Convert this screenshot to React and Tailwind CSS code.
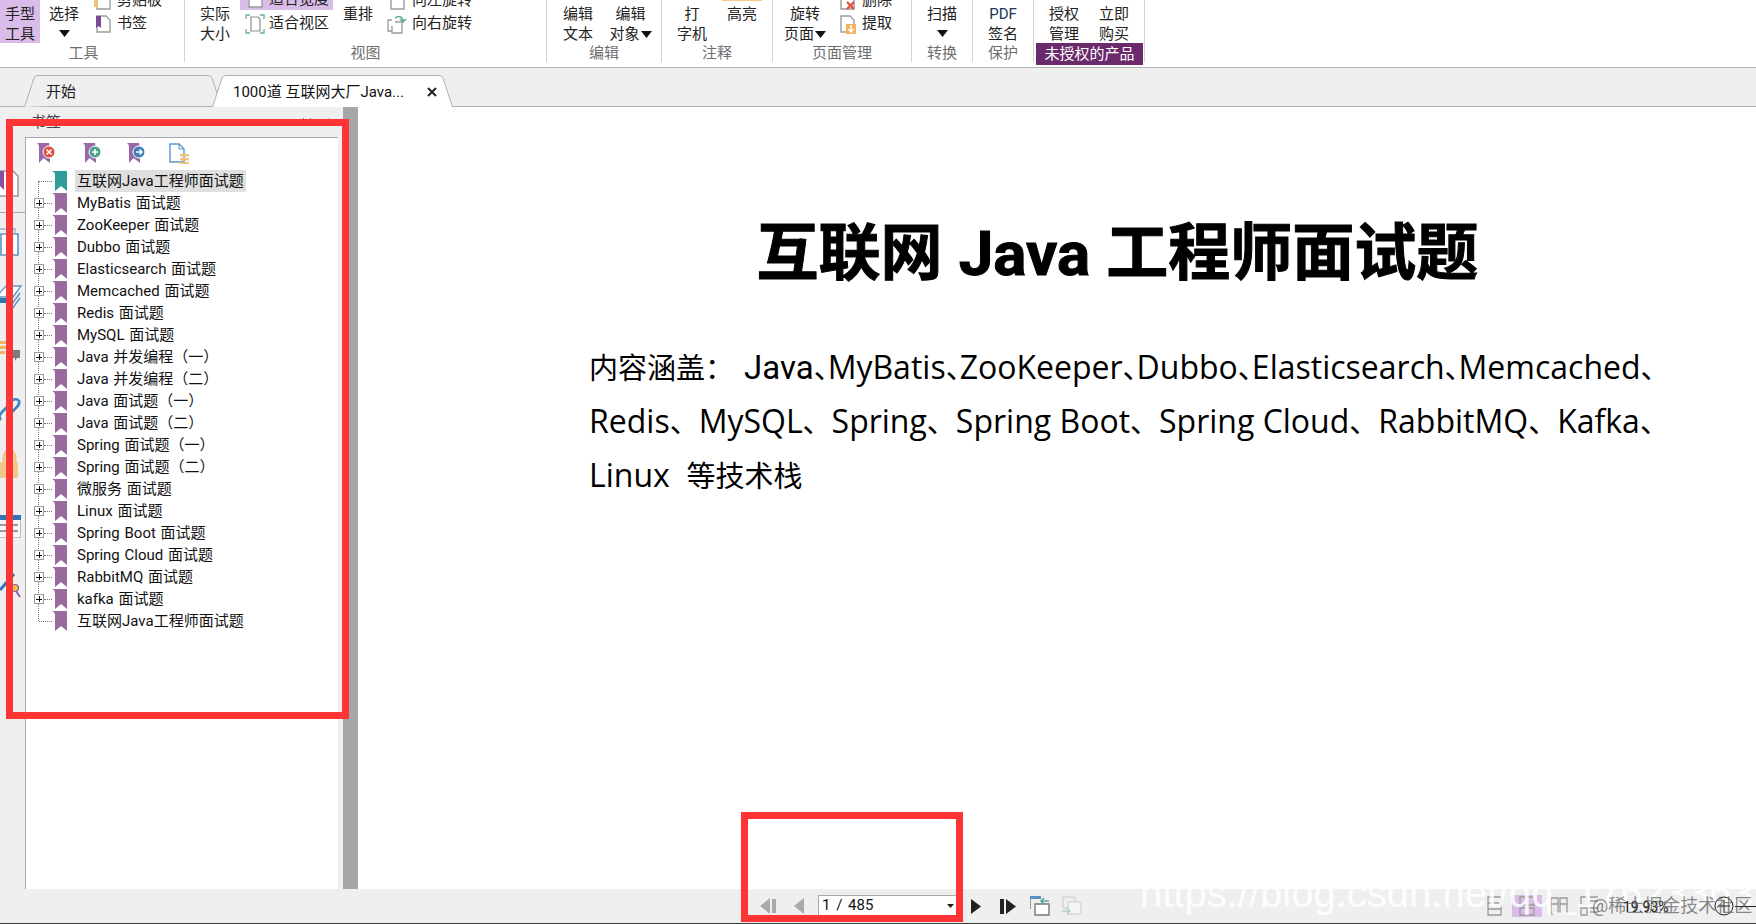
import React from "react";

const Arrow = ({ className = "" }) => (
  <svg width="11" height="7" viewBox="0 0 11 7" className={className}><path d="M0 0H11L5.5 7Z" fill="#111" /></svg>
);

function Big({ w, ml = "", lines, arrow, arrowInline }) {
  return (
    <div className={`flex flex-col items-center pt-[4px] leading-[20px] shrink-0 ${ml}`} style={{ width: w }}>
      {lines.map((l, i) => (
        <div key={i} className="h-[20px] flex items-center whitespace-nowrap">
          {l}
          {arrowInline && i === lines.length - 1 && <Arrow className="ml-[1px]" />}
        </div>
      ))}
      {arrow && <div className="h-[20px] flex items-center"><Arrow /></div>}
    </div>
  );
}

function Group({ w, label, pr = "", children }) {
  return (
    <div className="shrink-0 h-[62px] border-r border-[#d2d2d2] flex flex-col" style={{ width: w }}>
      <div className="h-[43px] flex">{children}</div>
      <div className={`text-center text-[#6e6e6e] leading-[20px] ${pr}`}>{label}</div>
    </div>
  );
}

const PageIc = ({ children }) => (
  <svg width="20" height="20" viewBox="0 0 20 20" className="shrink-0">
    <path d="M4 2H13L17 6V18H4Z" fill="#fff" stroke="#9c9c9c" strokeWidth="1.4" />
    {children}
  </svg>
);

function Side({ w, ml = "", gap = "ml-[6px]", rows }) {
  return (
    <div className={`shrink-0 flex flex-col -mt-[11px] ${ml}`} style={{ width: w }}>
      {rows.map((r, i) => (
        <div key={i} className="h-[23px] flex items-center whitespace-nowrap">{r.icon}<span className={gap}>{r.t}</span></div>
      ))}
    </div>
  );
}

function Ribbon() {
  return (
    <div className="h-[68px] shrink-0 bg-white border-b border-[#b4b4b4] flex overflow-hidden text-[15px] text-[#222]">
      <Group w={185} label="工具" pr="pr-[17px]">
        <div className="w-[40px] h-[43px] bg-[#d9bde8] flex flex-col pt-[4px] leading-[20px] shrink-0 text-center"><div>手型</div><div>工具</div></div>
        <Big w={48} lines={["选择"]} arrow />
        <Side w={70} ml="ml-[5px]" gap="ml-[4px]" rows={[
          { t: "剪贴板", icon: <PageIc><path d="M1 5H5V16H1Z" fill="#f0c27a" /></PageIc> },
          { t: "书签", icon: <PageIc><path d="M3 2H8V14L5.5 12L3 14Z" fill="#7a4a96" /></PageIc> },
        ]} />
      </Group>
      <Group w={362} label="视图">
        <Big w={40} ml="ml-[10px]" lines={["实际", "大小"]} />
        <div className="w-[93px] ml-[5px] shrink-0 flex flex-col -mt-[12px]">
          <div className="h-[22px] bg-[#d9bde8] flex items-center pl-[5px] whitespace-nowrap"><PageIc /><span className="ml-[4px]">适合宽度</span></div>
          <div className="h-[23px] mt-[2px] flex items-center pl-[5px] whitespace-nowrap">
            <svg width="20" height="20" viewBox="0 0 20 20" className="shrink-0">
              <path d="M6 3H13L15 5V17H6Z" fill="#fff" stroke="#8d8d8d" strokeWidth="1.2" />
              <path d="M1 5V1H5M15 1H19V5M19 15V19H15M5 19H1V15" fill="none" stroke="#6fae9f" strokeWidth="1.4" />
            </svg>
            <span className="ml-[4px]">适合视区</span>
          </div>
        </div>
        <div className="w-[50px] shrink-0 text-center pt-[4px] leading-[20px]">重排</div>
        <Side w={120} ml="ml-[4px]" gap="ml-[5px]" rows={[
          { t: "向左旋转", icon: <PageIc /> },
          { t: "向右旋转", icon: (
            <svg width="20" height="20" viewBox="0 0 20 20" className="shrink-0">
              <path d="M5 6H1V17H5M8 8H15V19H5V12" fill="#fff" stroke="#9c9c9c" strokeWidth="1.3" />
              <path d="M8 4C12 1 16 3 16 7M13 5L16 8L19 5" fill="none" stroke="#5aa796" strokeWidth="1.5" />
            </svg>
          ) },
        ]} />
      </Group>
      <Group w={115} label="编辑">
        <Big w={62} lines={["编辑", "文本"]} />
        <Big w={43} lines={["编辑", "对象"]} arrowInline />
      </Group>
      <Group w={111} label="注释">
        <Big w={60} lines={["打", "字机"]} />
        <div className="w-[40px] shrink-0 relative text-center pt-[4px] leading-[20px]">
          <div className="absolute top-0 left-0 right-0 h-[1px] bg-[#f5c98e]" />
          高亮
        </div>
      </Group>
      <Group w={139} label="页面管理">
        <Big w={64} lines={["旋转", "页面"]} arrowInline />
        <Side w={70} gap="ml-[5px]" rows={[
          { t: "删除", icon: <PageIc><path d="M10 11L17 18M17 11L10 18" stroke="#e0523c" strokeWidth="2.4" /></PageIc> },
          { t: "提取", icon: <PageIc><rect x="9" y="10" width="10" height="10" fill="#f2b45f" /><path d="M14 11V17M11.5 15L14 18L16.5 15" stroke="#fff" strokeWidth="1.4" fill="none" /></PageIc> },
        ]} />
      </Group>
      <Group w={61} label="转换"><Big w={60} lines={["扫描"]} arrow /></Group>
      <Group w={61} label="保护">
        <Big w={60} lines={[<span key="p" className="text-[#1a3560]">PDF</span>, "签名"]} />
      </Group>
      <div className="w-[111px] shrink-0 h-[62px] flex flex-col border-r border-[#d2d2d2]">
        <div className="h-[43px] flex pl-[2px]">
          <Big w={56} lines={["授权", "管理"]} />
          <Big w={44} lines={["立即", "购买"]} />
        </div>
        <div className="ml-[2px] w-[107px] h-[23px] bg-[#6a2a6c] text-white text-center leading-[22px] whitespace-nowrap">未授权的产品</div>
      </div>
    </div>
  );
}

function Tabs() {
  return (
    <div className="h-[39px] shrink-0 bg-[#efefef] border-b border-[#b0b0b0] flex pl-[24px] pt-[7px] text-[15px]">
      <div className="relative w-[195px] h-[32px] shrink-0 pl-[22px] leading-[34px] text-[#222]">
        <svg className="absolute inset-0" width="195" height="32" viewBox="0 0 195 32">
          <path d="M0.5 32L10 3Q11 .5 14 .5H183Q187 .5 188 3L195 24" fill="#efefef" stroke="#b0b0b0" />
        </svg>
        <span className="relative">开始</span>
      </div>
      <div className="relative w-[241px] h-[32px] shrink-0 -ml-[7px] pl-[21px] leading-[34px] text-[#111]">
        <svg className="absolute inset-0" width="241" height="32" viewBox="0 0 241 32">
          <path d="M0.5 32L10 3Q11 .5 14 .5H226Q230 .5 231 3L240.5 32" fill="#fff" stroke="#b0b0b0" />
        </svg>
        <span className="relative">1000道 互联网大厂Java...</span>
        <svg className="absolute left-[215px] top-[12px]" width="10" height="10" viewBox="0 0 10 10">
          <path d="M1 1L9 9M9 1L1 9" stroke="#222" strokeWidth="2" />
        </svg>
      </div>
    </div>
  );
}

const Rail = () => (
  <div className="w-[25px] shrink-0 flex flex-col overflow-hidden">
    <svg width="20" height="27" viewBox="0 0 20 27" className="mt-[33px] shrink-0">
      <path d="M-4 1H13L18 6V26H-4Z" fill="#fff" stroke="#9a9a9a" strokeWidth="1.5" />
      <path d="M-4 1H4V20L0 16L-4 20Z" fill="#8a4fa0" />
    </svg>
    <div className="mt-[15px] flex-1 border-t border-[#a8a8a8] flex flex-col">
      <svg width="20" height="28" viewBox="0 0 20 28" className="mt-[15px] shrink-0">
        <path d="M-2 5V1H15V5" fill="none" stroke="#8db4d8" strokeWidth="1.4" />
        <path d="M1 6H18V27H1Z" fill="#fff" stroke="#5d97cc" strokeWidth="1.6" />
      </svg>
      <svg width="22" height="25" viewBox="0 0 22 25" className="mt-[29px] shrink-0">
        <path d="M6 1H21L13 12H-4Z" fill="#fff" stroke="#5d97cc" strokeWidth="1.3" />
        <path d="M-2 13H10L7 18H-2Z" fill="#2f74b5" />
        <path d="M20 8L12 19M20 13L12 24" stroke="#5d97cc" strokeWidth="1.5" />
      </svg>
      <svg width="22" height="22" viewBox="0 0 22 22" className="mt-[30px] shrink-0">
        <path d="M-2 1H7V4H-2ZM-2 6H7V9H-2ZM-2 11H5V14H-2Z" fill="#f2b45f" />
        <path d="M12 10H20V18H17L15 21V18H12Z" fill="#7c7c7c" />
      </svg>
      <svg width="21" height="26" viewBox="0 0 21 26" className="mt-[34px] shrink-0">
        <path d="M1 24C-2 21 0 18 3 15L11 7M11 6C13 3 17 2 19 5C20 8 18 10 15 13L8 20" fill="none" stroke="#3f86c6" strokeWidth="2.6" />
      </svg>
      <svg width="20" height="28" viewBox="0 0 20 28" className="mt-[28px] shrink-0">
        <path d="M4 12V7C4 -1 15 -1 15 7V12" fill="none" stroke="#f0c78a" strokeWidth="3" />
        <rect x="-2" y="12" width="20" height="16" rx="1" fill="#f0c78a" />
      </svg>
      <svg width="21" height="23" viewBox="0 0 21 23" className="mt-[37px] shrink-0">
        <rect x="-3" y="0" width="24" height="23" fill="#f5f5f5" stroke="#8f8f8f" />
        <rect x="-3" y="0" width="24" height="5" fill="#2f74b5" />
        <path d="M0 10H6M12 10H18M0 16H6M12 16H18" stroke="#9a9a9a" strokeWidth="2" />
      </svg>
      <svg width="21" height="25" viewBox="0 0 21 25" className="mt-[35px] shrink-0">
        <path d="M0 17L14 1" stroke="#2f74b5" strokeWidth="3" />
        <circle cx="15" cy="15" r="3.5" fill="#e9c24a" stroke="#8b5fa8" strokeWidth="1.2" />
        <path d="M16 18L20 24" stroke="#8b5fa8" strokeWidth="2" />
      </svg>
    </div>
  </div>
);

const ToolIc = ({ ml, color, d }) => (
  <svg width="19" height="20" viewBox="0 0 19 20" className={`shrink-0 ${ml}`}>
    <path d="M0 0H12L13 5V20L6.5 15L2 20V4Q2 1 0 0Z" fill="#9a68a8" />
    <circle cx="12" cy="9" r="6" fill={color} stroke="#fff" strokeWidth="1" />
    <path d={d} stroke="#fff" strokeWidth="1.6" fill="none" />
  </svg>
);

const tree = [
  "互联网Java工程师面试题", "MyBatis 面试题", "ZooKeeper 面试题", "Dubbo 面试题", "Elasticsearch 面试题",
  "Memcached 面试题", "Redis 面试题", "MySQL 面试题", "Java 并发编程（一）", "Java 并发编程（二）",
  "Java 面试题（一）", "Java 面试题（二）", "Spring 面试题（一）", "Spring 面试题（二）", "微服务 面试题",
  "Linux 面试题", "Spring Boot 面试题", "Spring Cloud 面试题", "RabbitMQ 面试题", "kafka 面试题", "互联网Java工程师面试题",
];

function Row({ t, i }) {
  const first = i === 0;
  const last = i === tree.length - 1;
  const hasBox = !first && !last;
  return (
    <div className="h-[22px] flex items-center">
      <div className="w-[10px] ml-[8px] shrink-0 h-[10px] relative">
        {hasBox && (
          <div className="w-[10px] h-[10px] border border-[#9a9a9a] bg-white relative flex items-center justify-center">
            <div className="absolute w-[6px] h-[1px] bg-[#111]" />
            <div className="absolute w-[1px] h-[6px] bg-[#111]" />
          </div>
        )}
      </div>
      <div className={`h-0 border-t border-dotted border-[#777] shrink-0 ${hasBox ? "w-[8px]" : "w-[13px] -ml-[5px]"}`} />
      <svg width="16" height="20" viewBox="0 0 16 20" className="shrink-0">
        <path d="M0 0H15V20L9 15L3 20V4Q3 1 0 0Z" fill={first ? "#2f9c98" : "#9a6a9e"} />
      </svg>
      <div className={`ml-[7px] px-[2px] h-[22px] leading-[23px] whitespace-nowrap text-[#111] [word-spacing:1px] ${first ? "bg-[#dfdfdf]" : ""}`}>{t}</div>
    </div>
  );
}

function Sidebar() {
  return (
    <div className="w-[343px] shrink-0 bg-[#efefef] flex flex-col text-[15px]">
      <div className="h-[30px] shrink-0 flex items-center pl-[31px] pr-[11px] text-[#444]">
        <span>书签</span>
        <svg width="30" height="10" viewBox="0 0 30 10" className="ml-auto"><path d="M1 1L5 5L1 9M9 1L5 5L9 9" fill="none" stroke="#777" /><path d="M28 1L22 5L28 9Z" fill="#777" /></svg>
      </div>
      <div className="flex-1 flex min-h-0">
        <Rail />
        <div className="flex-1 mr-[5px] bg-white border-l border-t border-[#a8a8a8]">
          <div className="h-[32px] flex items-center pb-[2px]">
            <ToolIc ml="ml-[11px]" color="#d9533f" d="M9.5 6.5L14.5 11.5M14.5 6.5L9.5 11.5" />
            <ToolIc ml="ml-[27px]" color="#4fa08c" d="M9 9H15M12 6V12" />
            <ToolIc ml="ml-[25px]" color="#3f7fb8" d="M9 9H15M12.5 6.5L15 9L12.5 11.5" />
            <svg width="20" height="21" viewBox="0 0 20 21" className="ml-[23px] shrink-0">
              <path d="M1 1H10L15 6V19H1Z" fill="#fff" stroke="#5d97cc" strokeWidth="1.4" />
              <path d="M10 1V6H15" fill="none" stroke="#5d97cc" />
              <path d="M11 11H20V13.5H11ZM11 15H20V17.5H11ZM11 19H20V21H11Z" fill="#f2c27a" />
            </svg>
          </div>
          <div className="relative">
            <div className="absolute left-[12px] top-[11px] bottom-[11px] border-l border-dotted border-[#777]" />
            {tree.map((t, i) => <Row key={i} t={t} i={i} />)}
          </div>
        </div>
      </div>
    </div>
  );
}

function Doc() {
  const C = ({ children }) => <span className="text-[29px]">{children}</span>;
  const S = () => <span className="inline-block w-[14px] text-[29px]">、</span>;
  const B = () => <span className="inline-block w-[29px] text-[29px]">、</span>;
  return (
    <div className="flex-1 bg-white pl-[231px] pr-[104px] text-black font-['Open_Sans','Noto_Sans_CJK_SC',sans-serif]">
      <div className="pt-[108px] pr-[23px] text-center text-[62px] leading-[72px] font-bold whitespace-nowrap [-webkit-text-stroke:1px_#000]">
        互联网 <span className="font-['Roboto',sans-serif]">Java</span> 工程师面试题
      </div>
      <div className="mt-[50px] text-[32px]">
        <div className="whitespace-nowrap h-[54px] leading-[54px]"><C>内容涵盖：</C><span className="inline-block w-[10px]" /><span className="font-['Roboto',sans-serif] text-[33px]">Java</span><S />MyBatis<S />ZooKeeper<S />Dubbo<S />Elasticsearch<S />Memcached<S /></div>
        <div className="whitespace-nowrap h-[54px] leading-[54px]">Redis<B />MySQL<B />Spring<B />Spring Boot<B />Spring Cloud<B />RabbitMQ<B />Kafka<B /></div>
        <div className="whitespace-nowrap h-[54px] leading-[54px]">Linux&nbsp; <C>等技术栈</C></div>
      </div>
    </div>
  );
}

function Bottom() {
  return (
    <div className="h-[35px] shrink-0 bg-[#efefef] border-b border-[#3c3c3c] flex items-center relative overflow-hidden text-[#111]">
      <svg width="17" height="16" viewBox="0 0 17 16" className="ml-[760px] shrink-0"><path d="M10 0V16L0 8ZM12 1H16V15H12Z" fill="#a9a9a9" /></svg>
      <svg width="10" height="16" viewBox="0 0 10 16" className="ml-[17px] shrink-0"><path d="M10 0V16L0 8Z" fill="#a9a9a9" /></svg>
      <div className="ml-[14px] w-[139px] h-[21px] bg-white border border-[#a8a8a8] shrink-0 flex items-center pl-[3px] pr-[2px] text-[15px] mt-[-1px] [word-spacing:2px]">
        1 / 485
        <svg width="7" height="4" viewBox="0 0 7 4" className="ml-auto"><path d="M0 0H7L3.5 4Z" fill="#222" /></svg>
      </div>
      <svg width="10" height="15" viewBox="0 0 10 15" className="ml-[14px] shrink-0"><path d="M0 0L10 7.5L0 15Z" fill="#222" /></svg>
      <svg width="16" height="15" viewBox="0 0 16 15" className="ml-[19px] shrink-0"><path d="M0 0H4V15H0ZM6 0L16 7.5L6 15Z" fill="#222" /></svg>
      <svg width="20" height="20" viewBox="0 0 20 20" className="ml-[14px] shrink-0">
        <path d="M0 0H11V3H0Z" fill="#5d8fc4" /><path d="M0 3H1V13H0Z" fill="#999" />
        <path d="M5 8H19V19H5Z" fill="#fff" stroke="#777" strokeWidth="1.4" />
        <path d="M19 5H11M14 2L11 5L14 8" stroke="#5aa796" strokeWidth="1.6" fill="none" />
      </svg>
      <svg width="20" height="20" viewBox="0 0 20 20" className="ml-[12px] shrink-0 opacity-40">
        <path d="M1 1H13V12H1Z" fill="none" stroke="#999" />
        <path d="M6 6H19V18H6Z" fill="#fff" stroke="#999" />
        <path d="M0 15H8M5 12L8 15L5 18" stroke="#5aa796" strokeWidth="1.4" fill="none" />
      </svg>
      <svg width="15" height="20" viewBox="0 0 15 20" className="ml-[405px] shrink-0"><path d="M1 1H14V19H1ZM1 7H14M1 13H14" fill="none" stroke="#9a9a9a" strokeWidth="1.3" /></svg>
      <div className="w-[30px] h-[22px] ml-[10px] bg-[#d9bde8] shrink-0 flex items-center justify-center">
        <svg width="16" height="20" viewBox="0 0 16 20"><path d="M1 1H15V9H1ZM1 12H15V19H1Z" fill="none" stroke="#9a9a9a" strokeWidth="1.3" /></svg>
      </div>
      <svg width="18" height="18" viewBox="0 0 18 18" className="ml-[8px] shrink-0"><path d="M1 1H8V17H1ZM10 1H17V17H10ZM1 7H8M10 7H17" fill="none" stroke="#9a9a9a" strokeWidth="1.3" /></svg>
      <svg width="19" height="20" viewBox="0 0 19 20" className="ml-[12px] shrink-0"><path d="M1 1H7V9H1ZM10 5H18M10 1H18M1 12H7V19H1ZM10 12H18M10 16H18" fill="none" stroke="#9a9a9a" strokeWidth="1.3" /></svg>
      <span className="absolute left-[1140px] top-[-19px] text-[40px] leading-[46px] text-white/85 font-['Liberation_Sans',sans-serif] whitespace-nowrap">https://blog.csdn.net/qq_17623363</span>
      <span className="absolute left-[1623px] top-[9px] text-[14px] leading-[18px]">19.93%</span>
      <svg width="20" height="20" viewBox="0 0 20 20" className="absolute left-[1714px] top-[7px]"><circle cx="10" cy="10" r="9" fill="none" stroke="#222" /><path d="M4 10H16M10 4V16" stroke="#222" /></svg>
      <div className="absolute left-[1735px] top-[17px] w-[21px] h-[1px] bg-[#222]" />
      <span className="absolute left-[1592px] top-[5px] text-[18px] leading-[24px] text-[#555]/70 whitespace-nowrap">@稀土掘金技术社区</span>
    </div>
  );
}

export default function App() {
  return (
    <div className="w-[1756px] h-[924px] relative overflow-hidden flex flex-col bg-white font-['Roboto','Noto_Sans_CJK_SC',sans-serif]">
      <Ribbon />
      <Tabs />
      <div className="flex-1 flex min-h-0">
        <Sidebar />
        <div className="w-[15px] shrink-0 bg-[#a6a6a6]" />
        <Doc />
      </div>
      <Bottom />
      <div className="absolute left-[6px] top-[119px] w-[343px] h-[600px] border-[7px] border-[#ff3535]" />
      <div className="absolute left-[741px] top-[812px] w-[222px] h-[110px] border-[7px] border-[#ff3535]" />
    </div>
  );
}
